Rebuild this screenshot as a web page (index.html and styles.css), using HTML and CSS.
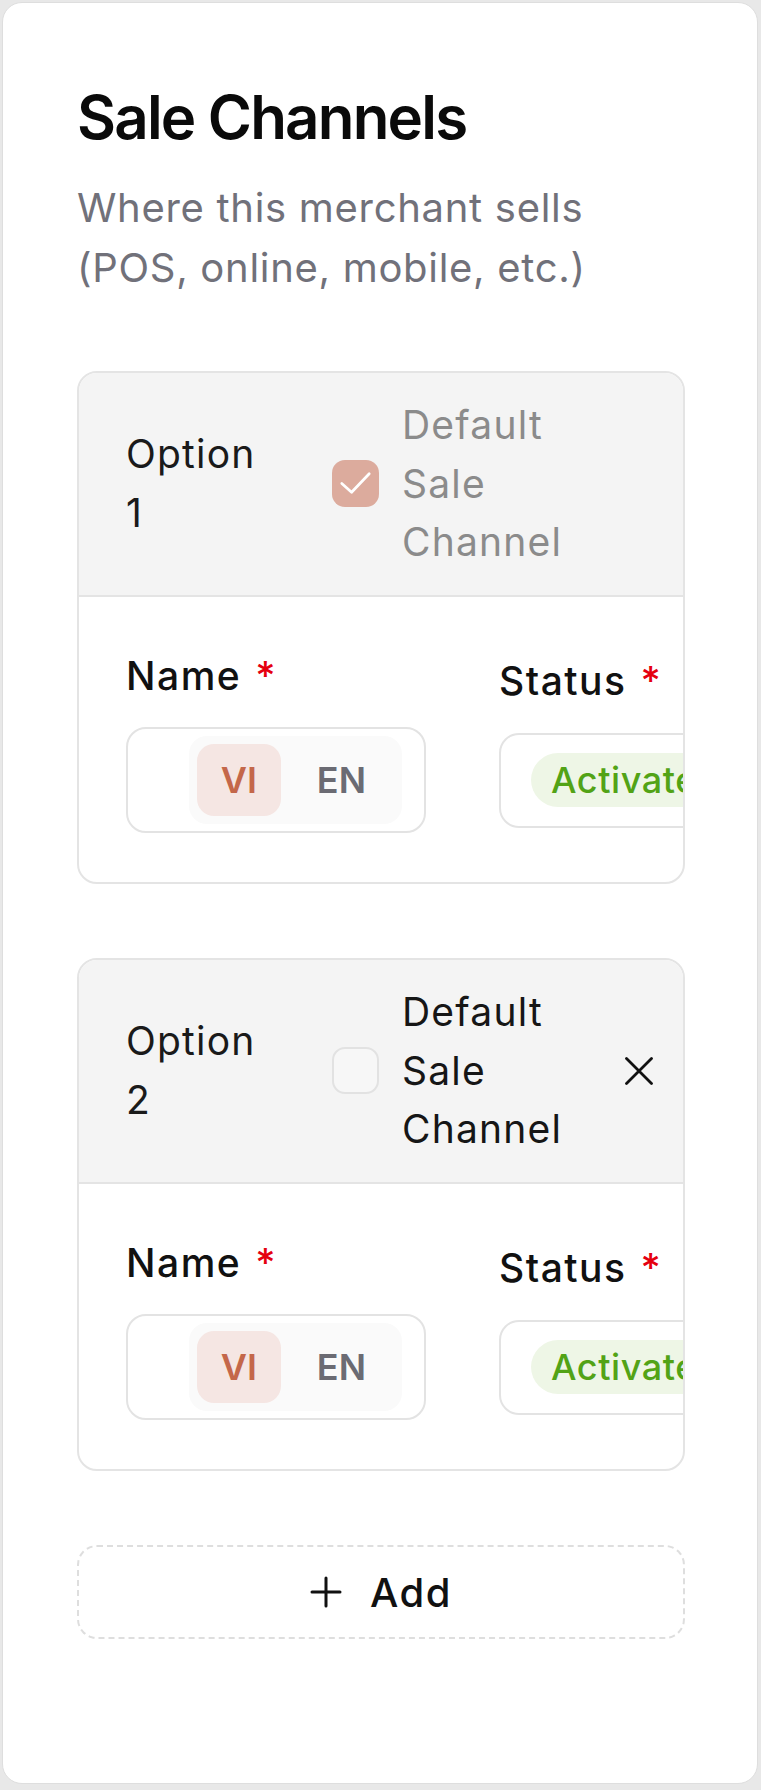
FILE: index.html
```html
<!DOCTYPE html>
<html lang="en">
<head>
<meta charset="utf-8">
<title>Sale Channels</title>
<link rel="stylesheet" href="styles.css">
</head>
<body>
<section class="panel">
  <h1 class="panel-title">Sale Channels</h1>
  <p class="panel-desc">Where this merchant sells (POS, online, mobile, etc.)</p>

  <div class="channel-list">
    <div class="channel-card">
      <div class="channel-head">
        <div class="channel-index">Option 1</div>
        <span class="checkbox checkbox-checked">
          <svg viewBox="0 0 48 48" width="47" height="47"><path d="M10 24 L20 33 L38 14" fill="none" stroke="#fff" stroke-width="2.8" stroke-linecap="round" stroke-linejoin="round"/></svg>
        </span>
        <span class="default-label default-label-disabled">Default Sale Channel</span>
      </div>
      <div class="channel-body">
        <div class="field">
          <label class="field-label">Name<span class="req">*</span></label>
          <div class="name-input">
            <div class="lang-seg">
              <span class="lang-pill lang-active">VI</span>
              <span class="lang-pill">EN</span>
            </div>
          </div>
        </div>
        <div class="field">
          <label class="field-label">Status<span class="req">*</span></label>
          <div class="status-input">
            <span class="badge">Activated</span>
          </div>
        </div>
      </div>
    </div>

    <div class="channel-card">
      <div class="channel-head">
        <div class="channel-index">Option 2</div>
        <span class="checkbox"></span>
        <span class="default-label">Default Sale Channel</span>
        <button class="remove-btn" type="button" aria-label="Remove">
          <svg viewBox="0 0 28 28" width="28" height="28"><path d="M1.5 1.5 L26.5 26.5 M26.5 1.5 L1.5 26.5" stroke="#111" stroke-width="2.8" stroke-linecap="round"/></svg>
        </button>
      </div>
      <div class="channel-body">
        <div class="field">
          <label class="field-label">Name<span class="req">*</span></label>
          <div class="name-input">
            <div class="lang-seg">
              <span class="lang-pill lang-active">VI</span>
              <span class="lang-pill">EN</span>
            </div>
          </div>
        </div>
        <div class="field">
          <label class="field-label">Status<span class="req">*</span></label>
          <div class="status-input">
            <span class="badge">Activated</span>
          </div>
        </div>
      </div>
    </div>

    <button class="add-btn" type="button">
      <svg viewBox="0 0 32 32" width="32" height="32"><path d="M16 2 V30 M2 16 H30" stroke="#111" stroke-width="3" stroke-linecap="round"/></svg>
      <span>Add</span>
    </button>
  </div>
</section>
</body>
</html>
```

FILE: styles.css
```css
* { box-sizing: border-box; }

html, body {
  margin: 0;
  background: #e8e8e8;
}

body {
  padding: 2px 3px 4px 2px;
  font-family: Inter, "Noto Sans", sans-serif;
  color: #141414;
}

.panel {
  background: #ffffff;
  border: 1px solid #dedede;
  border-radius: 20px;
  padding: 74px 72px 144px 74px;
}

.panel-title {
  margin: 0;
  font-size: 60px;
  line-height: 80px;
  font-weight: 600;
  color: #0a0a0a;
  letter-spacing: -1.8px;
}

.panel-desc {
  margin: 21px 0 0 0;
  font-size: 40px;
  line-height: 60px;
  color: #71717a;
  font-weight: 400;
  letter-spacing: 0.7px;
}

.channel-list {
  margin-top: 73px;
  display: flex;
  flex-direction: column;
  gap: 74px;
}

.channel-card {
  border: 2px solid #e4e4e4;
  border-radius: 20px;
  overflow: hidden;
  background: #fff;
}

.channel-head {
  display: flex;
  align-items: center;
  background: #f4f4f4;
  border-bottom: 2px solid #e4e4e4;
  padding: 23px 30px 23px 47px;
  font-size: 39px;
  line-height: 58.5px;
  letter-spacing: 1.2px;
}

.channel-index {
  width: 140px;
  color: #1a1a1a;
}

.checkbox {
  margin-left: 66px;
  width: 47px;
  height: 47px;
  flex: 0 0 47px;
  border-radius: 13px;
  border: 2px solid #e2e2e2;
  background: #f7f7f7;
  display: flex;
}

.checkbox-checked {
  border: none;
  background: #dcab9d;
}

.default-label {
  margin-left: 23px;
  width: 200px;
  color: #161616;
}

.default-label-disabled {
  color: #8b8b8b;
}

.remove-btn {
  margin-left: auto;
  padding: 0;
  border: 0;
  background: transparent;
  display: flex;
  width: 28px;
  height: 28px;
}

.channel-body {
  display: grid;
  grid-template-columns: 300px 300px;
  column-gap: 73px;
  align-items: center;
  padding: 50px 48px 49px 47px;
}

.field {
  display: flex;
  flex-direction: column;
}

.field-label {
  font-size: 39px;
  line-height: 58.5px;
  font-weight: 500;
  color: #111;
  margin-bottom: 22px;
  letter-spacing: 1.5px;
}

.req {
  color: #e5000f;
  margin-left: 14px;
}

.name-input {
  height: 106px;
  border: 2px solid #e3e3e3;
  border-radius: 20px;
  display: flex;
  align-items: center;
  justify-content: flex-end;
  padding-right: 22px;
}

.lang-seg {
  display: flex;
  gap: 12px;
  padding: 8px 12px 8px 8px;
  background: #fafafa;
  border-radius: 18px;
}

.lang-pill {
  height: 72px;
  padding: 0 24px;
  border-radius: 17px;
  display: flex;
  align-items: center;
  font-size: 36px;
  font-weight: 600;
  color: #6b6b73;
}

.lang-active {
  background: #f5e6e3;
  color: #c4674a;
}

.status-input {
  height: 95px;
  border: 2px solid #e3e3e3;
  border-radius: 20px;
  display: flex;
  align-items: center;
  padding-left: 30px;
}

.badge {
  height: 54px;
  padding: 0 20px;
  border-radius: 27px;
  background: #eef6e6;
  color: #52a316;
  font-size: 36px;
  font-weight: 500;
  letter-spacing: 0.6px;
  display: flex;
  align-items: center;
  white-space: nowrap;
}

.add-btn {
  height: 94px;
  border: 2px dashed #dedede;
  border-radius: 20px;
  background: #fff;
  display: flex;
  align-items: center;
  justify-content: center;
  gap: 28px;
  font-family: Inter, "Noto Sans", sans-serif;
  font-size: 40px;
  font-weight: 500;
  letter-spacing: 1.5px;
  color: #111;
  cursor: pointer;
}
```
